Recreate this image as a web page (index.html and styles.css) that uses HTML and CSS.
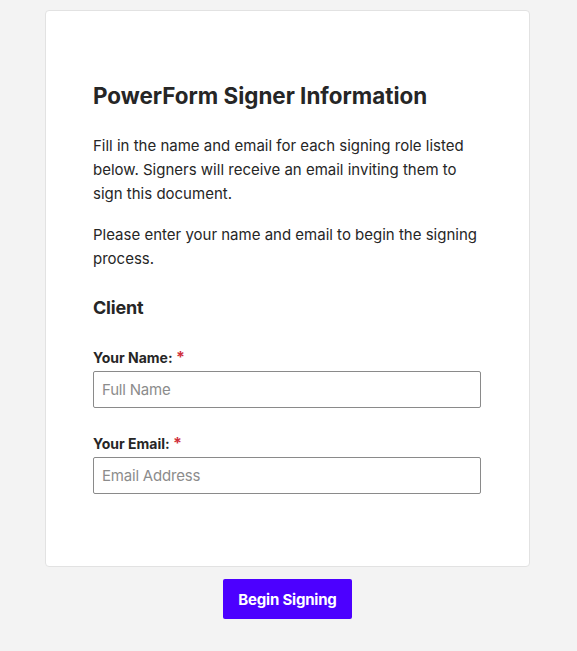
FILE: index.html
```html
<!DOCTYPE html>
<html lang="en">
<head>
    <meta charset="UTF-8">
    <meta name="viewport" content="width=device-width, initial-scale=1.0">
    <title>PowerForm Signer Information</title>
    <link rel="stylesheet" href="styles.css">
</head>
<body>
    <div class="page">
        <div class="card">
            <h1>PowerForm Signer Information</h1>
            <p>Fill in the name and email for each signing role listed below. Signers will receive an email inviting them to sign this document.</p>
            <p>Please enter your name and email to begin the signing process.</p>

            <h2>Client</h2>
            <div class="field">
                <label for="name">Your Name: <span class="required">*</span></label>
                <input type="text" id="name" placeholder="Full Name">
            </div>
            <div class="field">
                <label for="email">Your Email: <span class="required">*</span></label>
                <input type="email" id="email" placeholder="Email Address">
            </div>
        </div>
        <div class="controls">
            <button class="begin">Begin Signing</button>
        </div>
    </div>
</body>
</html>
```

FILE: styles.css
```css
body {
    margin: 0;
    padding: 10px 0;
    background-color: #f3f3f3;
    font-family: 'Inter', sans-serif;
    color: #262626;
}
.page {
    width: 485px;
    margin: 0 auto;
    position: relative;
    left: -1px;
}
.card {
    background-color: white;
    border: 1px solid #e2e2e2;
    border-radius: 4px;
    padding: 70px 48px 72px 47px;
}
h1 {
    margin: 0 0 23px;
    font-size: 22.4px;
    line-height: 30px;
    font-weight: 700;
}
p {
    margin: 0 0 17px;
    font-size: 15px;
    line-height: 24px;
}
h2 {
    margin: 25px 0 28px;
    font-size: 18px;
    line-height: 24px;
    font-weight: 700;
    letter-spacing: -0.2px;
}
.field {
    display: flex;
    flex-direction: column;
    gap: 4px;
    margin-bottom: 26px;
}
.field:last-child {
    margin-bottom: 0;
}
label {
    font-size: 14px;
    line-height: 18px;
    font-weight: 700;
}
.required {
    color: #d0303c;
    font-size: 16px;
}
input {
    box-sizing: border-box;
    width: 100%;
    height: 37px;
    padding: 0 8px;
    border: 1px solid #8a8a8a;
    border-radius: 2px;
    font-family: inherit;
    font-size: 15px;
    letter-spacing: -0.2px;
    color: #262626;
}
input::placeholder {
    color: #8c8c8c;
}
.controls {
    display: flex;
    justify-content: center;
    margin-top: 12px;
}
.begin {
    background-color: #4c00ff;
    color: white;
    border: none;
    border-radius: 2px;
    height: 40px;
    padding: 0 15px;
    font-family: inherit;
    font-size: 15px;
    font-weight: 700;
    letter-spacing: -0.2px;
    cursor: pointer;
}
```
